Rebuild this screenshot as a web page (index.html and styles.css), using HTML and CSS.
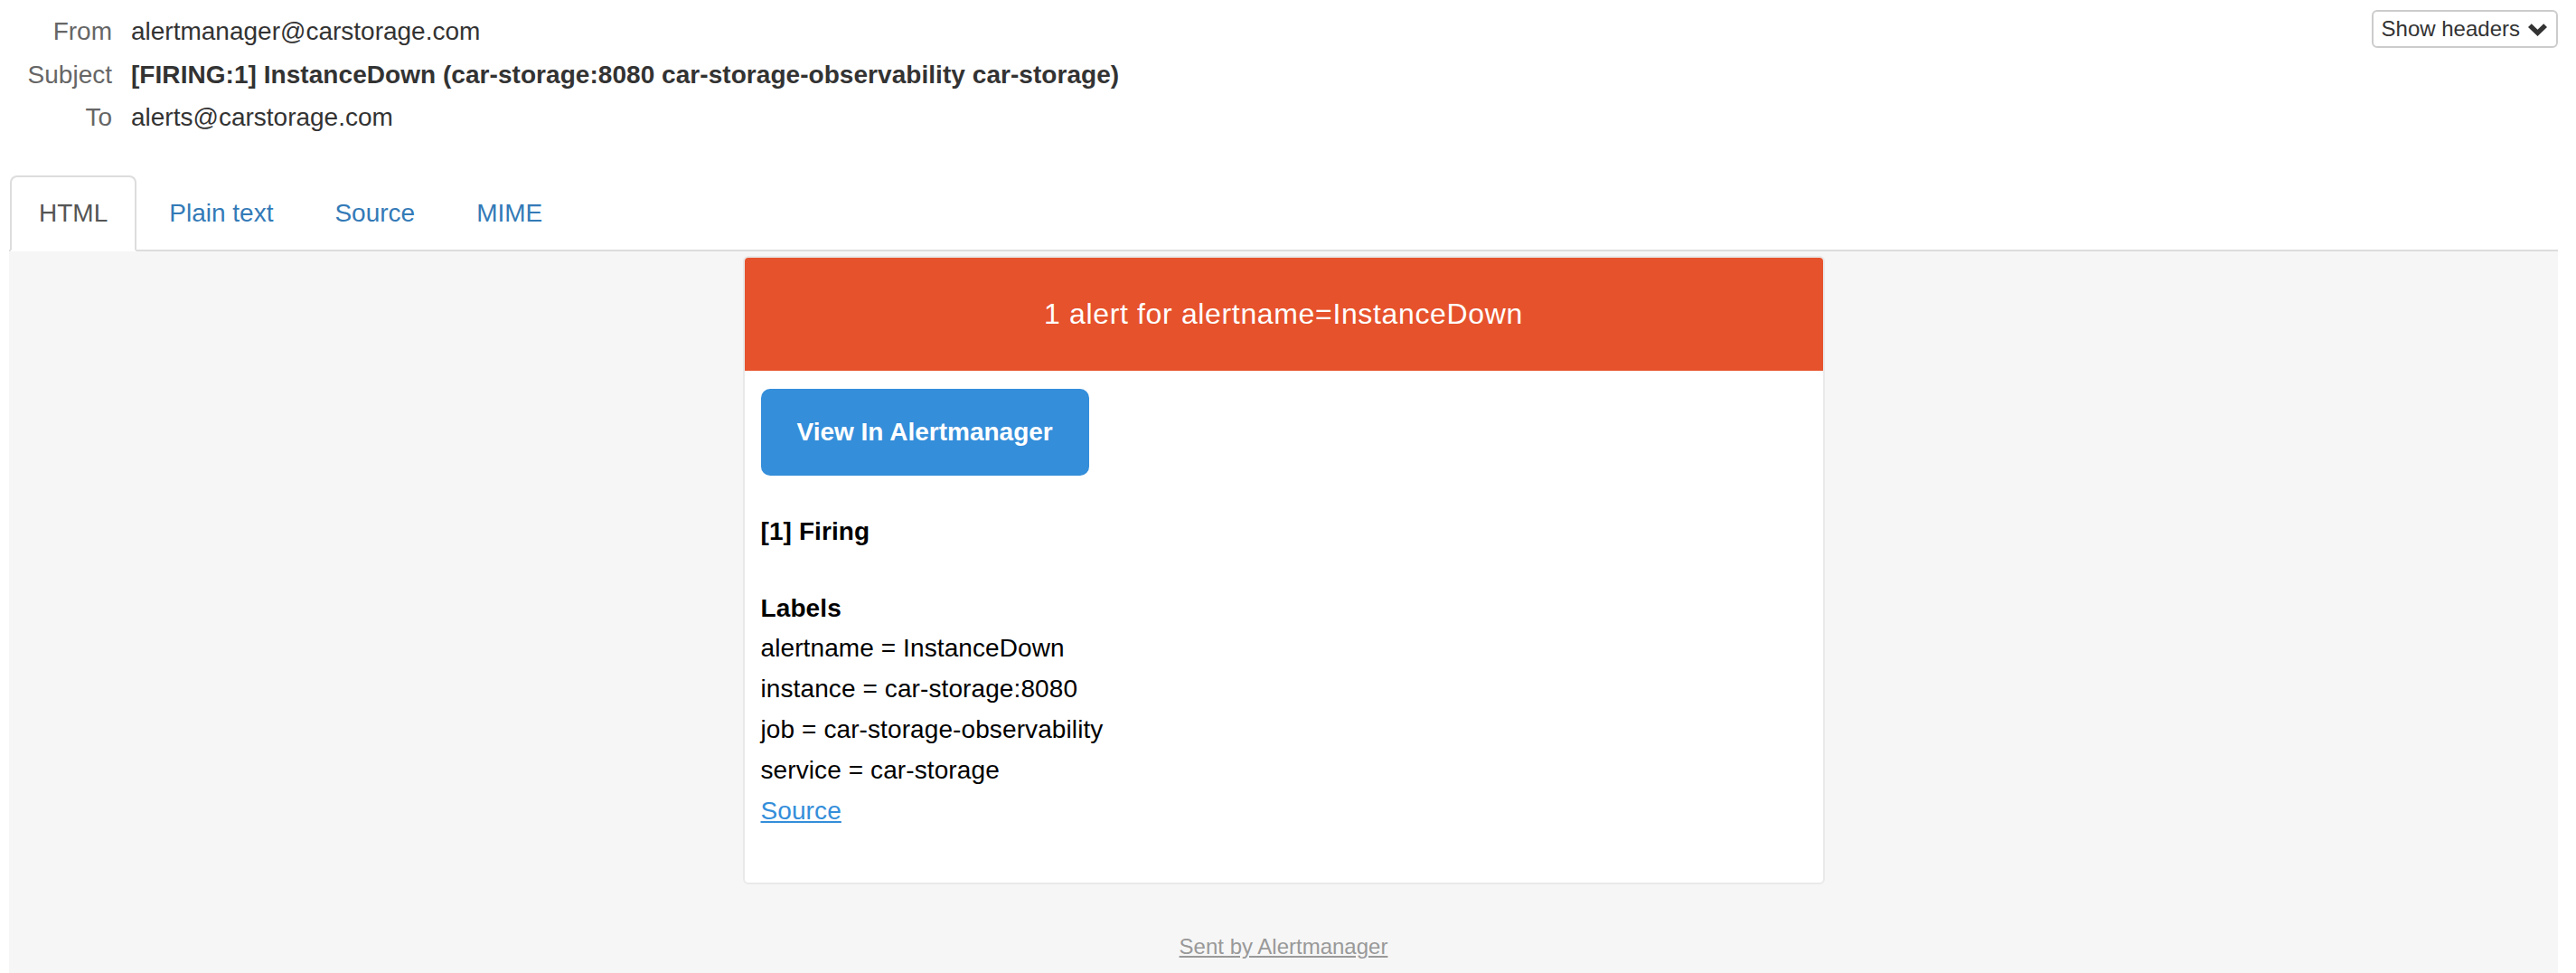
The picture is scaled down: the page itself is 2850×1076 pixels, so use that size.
FILE: index.html
```html
<!DOCTYPE html>
<html lang="en">
<head>
<meta charset="utf-8">
<title>[FIRING:1] InstanceDown</title>
<link rel="stylesheet" href="styles.css">
</head>
<body>
<div class="page">
  <div class="headers">
    <dl class="meta">
      <dt>From</dt><dd>alertmanager@carstorage.com</dd>
      <dt>Subject</dt><dd class="subject">[FIRING:1] InstanceDown (car-storage:8080 car-storage-observability car-storage)</dd>
      <dt>To</dt><dd>alerts@carstorage.com</dd>
    </dl>
    <button class="show-headers" type="button">Show headers <svg class="chev" width="21" height="14" viewBox="0 0 20 13"><path d="M0 3.6 L3.6 0 L10 6.2 L16.4 0 L20 3.6 L10 13.2 Z" fill="#333"/></svg></button>
  </div>
  <ul class="tabs">
    <li class="active"><a href="#">HTML</a></li>
    <li><a href="#">Plain text</a></li>
    <li><a href="#">Source</a></li>
    <li><a href="#">MIME</a></li>
  </ul>
  <div class="preview">
    <div class="card">
      <div class="alert-title">1 alert for alertname=InstanceDown</div>
      <div class="card-body">
        <div class="block btn-row"><a class="btn" href="#">View In Alertmanager</a></div>
        <div class="block"><strong>[1] Firing</strong></div>
        <div class="block">
          <strong>Labels</strong><br>
          alertname = InstanceDown<br>
          instance = car-storage:8080<br>
          job = car-storage-observability<br>
          service = car-storage<br>
          <a class="src" href="#">Source</a>
        </div>
      </div>
    </div>
    <div class="footer"><a href="#">Sent by Alertmanager</a></div>
  </div>
</div>
</body>
</html>
```
FILE: styles.css
```css
* { box-sizing: border-box; }
html, body { margin: 0; padding: 0; background: #fff; }
body {
  font-family: "Liberation Sans", Arial, Helvetica, sans-serif;
  color: #333;
}
.page {
  display: flex;
  flex-direction: column;
  height: 100vh;
  padding: 0 20px 0 10px;
}
.headers {
  display: flex;
  justify-content: space-between;
  align-items: flex-start;
  padding-top: 11px;
}
.meta {
  display: grid;
  grid-template-columns: 114px auto;
  column-gap: 21px;
  margin: 0;
  font-size: 28px;
  line-height: 47.5px;
}
.meta dt { text-align: right; color: #666; }
.meta dd { margin: 0; color: #333; }
.meta dd.subject { font-weight: bold; letter-spacing: 0.05px; }
.show-headers {
  display: flex;
  align-items: center;
  gap: 9px;
  height: 42px;
  padding: 0 10px 0 9px;
  border: 2px solid #ccc;
  border-radius: 6px;
  background: #fff;
  color: #333;
  font-family: inherit;
  font-size: 24px;
  line-height: 38px;
}
.chev { display: block; margin-top: 1px; }
.tabs {
  display: flex;
  list-style: none;
  margin: 40.5px 0 0;
  padding: 0 0 0 1px;
  border-bottom: 2px solid #ddd;
}
.tabs li { margin-bottom: -2px; }
.tabs a {
  display: block;
  margin-right: 4px;
  padding: 20px 30px;
  line-height: 40px;
  font-size: 28px;
  color: #337ab7;
  text-decoration: none;
  border: 2px solid transparent;
  border-radius: 8px 8px 0 0;
}
.tabs li.active a {
  color: #555;
  background: #fff;
  border-color: #ddd #ddd transparent;
}
.preview {
  flex: 1;
  background: #f6f6f6;
  padding-top: 5px;
}
.card {
  width: 1197px;
  margin: 0 auto;
  background: #fff;
  border: 2px solid #e9e9e9;
  border-radius: 6px;
}
.alert-title {
  background: #e6522c;
  color: #fff;
  font-size: 32px;
  letter-spacing: 0.65px;
  line-height: 44.8px;
  padding: 40px;
  text-align: center;
  border-radius: 4px 4px 0 0;
}
.card-body {
  padding: 20px 18px 17px;
  font-size: 28px;
  line-height: 44.8px;
  letter-spacing: 0.1px;
  color: #000;
}
.block { padding-bottom: 40px; }
.btn-row { display: flex; }
.btn {
  display: block;
  padding: 20px 40px;
  line-height: 56px;
  background: #348eda;
  color: #fff;
  font-weight: bold;
  letter-spacing: 0;
  text-decoration: none;
  border-radius: 10px;
}
.src { color: #348eda; text-decoration: underline; }
.footer {
  padding-top: 50px;
  text-align: center;
  font-size: 24px;
  line-height: 38.4px;
}
.footer a { color: #999; text-decoration: underline; }
```
